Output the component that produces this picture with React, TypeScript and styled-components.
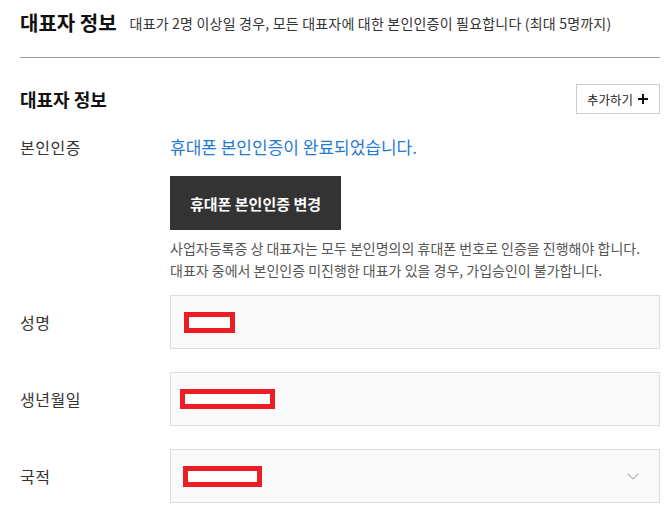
import React from "react";
import styled, { createGlobalStyle } from "styled-components";

const GlobalStyle = createGlobalStyle`
  html, body {
    margin: 0;
    padding: 0;
    background: #fff;
  }
  body {
    font-family: "Noto Sans CJK KR", "Noto Sans", sans-serif;
    color: #333;
  }
`;

type Field = {
  label: string;
  offset: number;
  width: number;
  height: number;
  select?: boolean;
};

const fields: Field[] = [
  { label: "성명", offset: 13, width: 51, height: 21 },
  { label: "생년월일", offset: 9, width: 95, height: 20 },
  { label: "국적", offset: 12, width: 79, height: 21, select: true },
];

export default function App() {
  return (
    <>
      <GlobalStyle />
      <Page>
        <Header>
          <PageTitle>대표자 정보</PageTitle>
          <PageDesc>
            대표가 2명 이상일 경우, 모든 대표자에 대한 본인인증이 필요합니다
            (최대 5명까지)
          </PageDesc>
        </Header>

        <SectionHead>
          <SectionTitle>대표자 정보</SectionTitle>
          <AddButton type="button">
            추가하기
            <svg width="10" height="10" viewBox="0 0 10 10">
              <path d="M5 0v10M0 5h10" stroke="#111" strokeWidth="2" />
            </svg>
          </AddButton>
        </SectionHead>

        <AuthRow>
          <Label>본인인증</Label>
          <AuthBody>
            <AuthDone>휴대폰 본인인증이 완료되었습니다.</AuthDone>
            <DarkButton type="button">휴대폰 본인인증 변경</DarkButton>
            <Help>
              사업자등록증 상 대표자는 모두 본인명의의 휴대폰 번호로 인증을
              진행해야 합니다.
              <br />
              대표자 중에서 본인인증 미진행한 대표가 있을 경우, 가입승인이
              불가합니다.
            </Help>
          </AuthBody>
        </AuthRow>

        <FieldList>
          {fields.map((f) => (
            <FieldRow key={f.label}>
              <Label>{f.label}</Label>
              <InputBox>
                <Redacted $offset={f.offset} $w={f.width} $h={f.height} />
                {f.select && (
                  <Chevron width="12" height="7" viewBox="0 0 12 7">
                    <polyline
                      points="0.5,0.5 6,6 11.5,0.5"
                      fill="none"
                      stroke="#b5b5b5"
                      strokeWidth="1.2"
                    />
                  </Chevron>
                )}
              </InputBox>
            </FieldRow>
          ))}
        </FieldList>
      </Page>
    </>
  );
}

const Page = styled.div`
  width: 640px;
  padding: 0 8px 0 20px;
`;

const Header = styled.div`
  display: flex;
  align-items: center;
  gap: 13px;
  height: 46px;
  padding-bottom: 11px;
  border-bottom: 1px solid #999;
`;

const PageTitle = styled.h1`
  margin: 0;
  font-size: 20px;
  font-weight: 700;
  color: #111;
  line-height: 24px;
`;

const PageDesc = styled.span`
  font-size: 14px;
  color: #333;
  line-height: 20px;
  letter-spacing: 0.2px;
`;

const SectionHead = styled.div`
  display: flex;
  align-items: center;
  justify-content: space-between;
  margin-top: 26px;
  height: 30px;
`;

const SectionTitle = styled.h2`
  margin: 0;
  font-size: 18px;
  font-weight: 700;
  color: #111;
  line-height: 22px;
`;

const AddButton = styled.button`
  display: flex;
  align-items: center;
  gap: 5px;
  height: 30px;
  padding: 0 11px 0 10px;
  background: #fff;
  border: 1px solid #ccc;
  font-family: inherit;
  font-size: 12.5px;
  color: #222;
  cursor: pointer;
`;

const AuthRow = styled.div`
  display: grid;
  grid-template-columns: 150px 1fr;
  margin-top: 22px;
`;

const Label = styled.div`
  font-size: 16px;
  color: #333;
  line-height: 22px;
  letter-spacing: 0.5px;
`;

const AuthBody = styled.div`
  display: flex;
  flex-direction: column;
  align-items: flex-start;
`;

const AuthDone = styled.div`
  font-size: 17px;
  color: #1f7ad5;
  line-height: 22px;
`;

const DarkButton = styled.button`
  margin-top: 18px;
  height: 54px;
  padding: 0 20px;
  background: #333;
  border: 0;
  color: #fff;
  font-family: inherit;
  font-size: 15px;
  font-weight: 700;
  cursor: pointer;
`;

const Help = styled.p`
  margin: 7px 0 0;
  font-size: 14px;
  color: #555;
  line-height: 22px;
`;

const FieldList = styled.div`
  display: flex;
  flex-direction: column;
  gap: 23px;
  margin-top: 14px;
`;

const FieldRow = styled.div`
  display: grid;
  grid-template-columns: 150px 1fr;
  align-items: center;
`;

const InputBox = styled.div`
  display: flex;
  align-items: center;
  height: 52px;
  border: 1px solid #ddd;
  background: #fafafa;
`;

const Redacted = styled.span<{ $offset: number; $w: number; $h: number }>`
  box-sizing: border-box;
  margin-left: ${(p) => p.$offset}px;
  width: ${(p) => p.$w}px;
  height: ${(p) => p.$h}px;
  border: 5px solid #ee1c25;
  background: #fff;
`;

const Chevron = styled.svg`
  margin-left: auto;
  margin-right: 20px;
`;
